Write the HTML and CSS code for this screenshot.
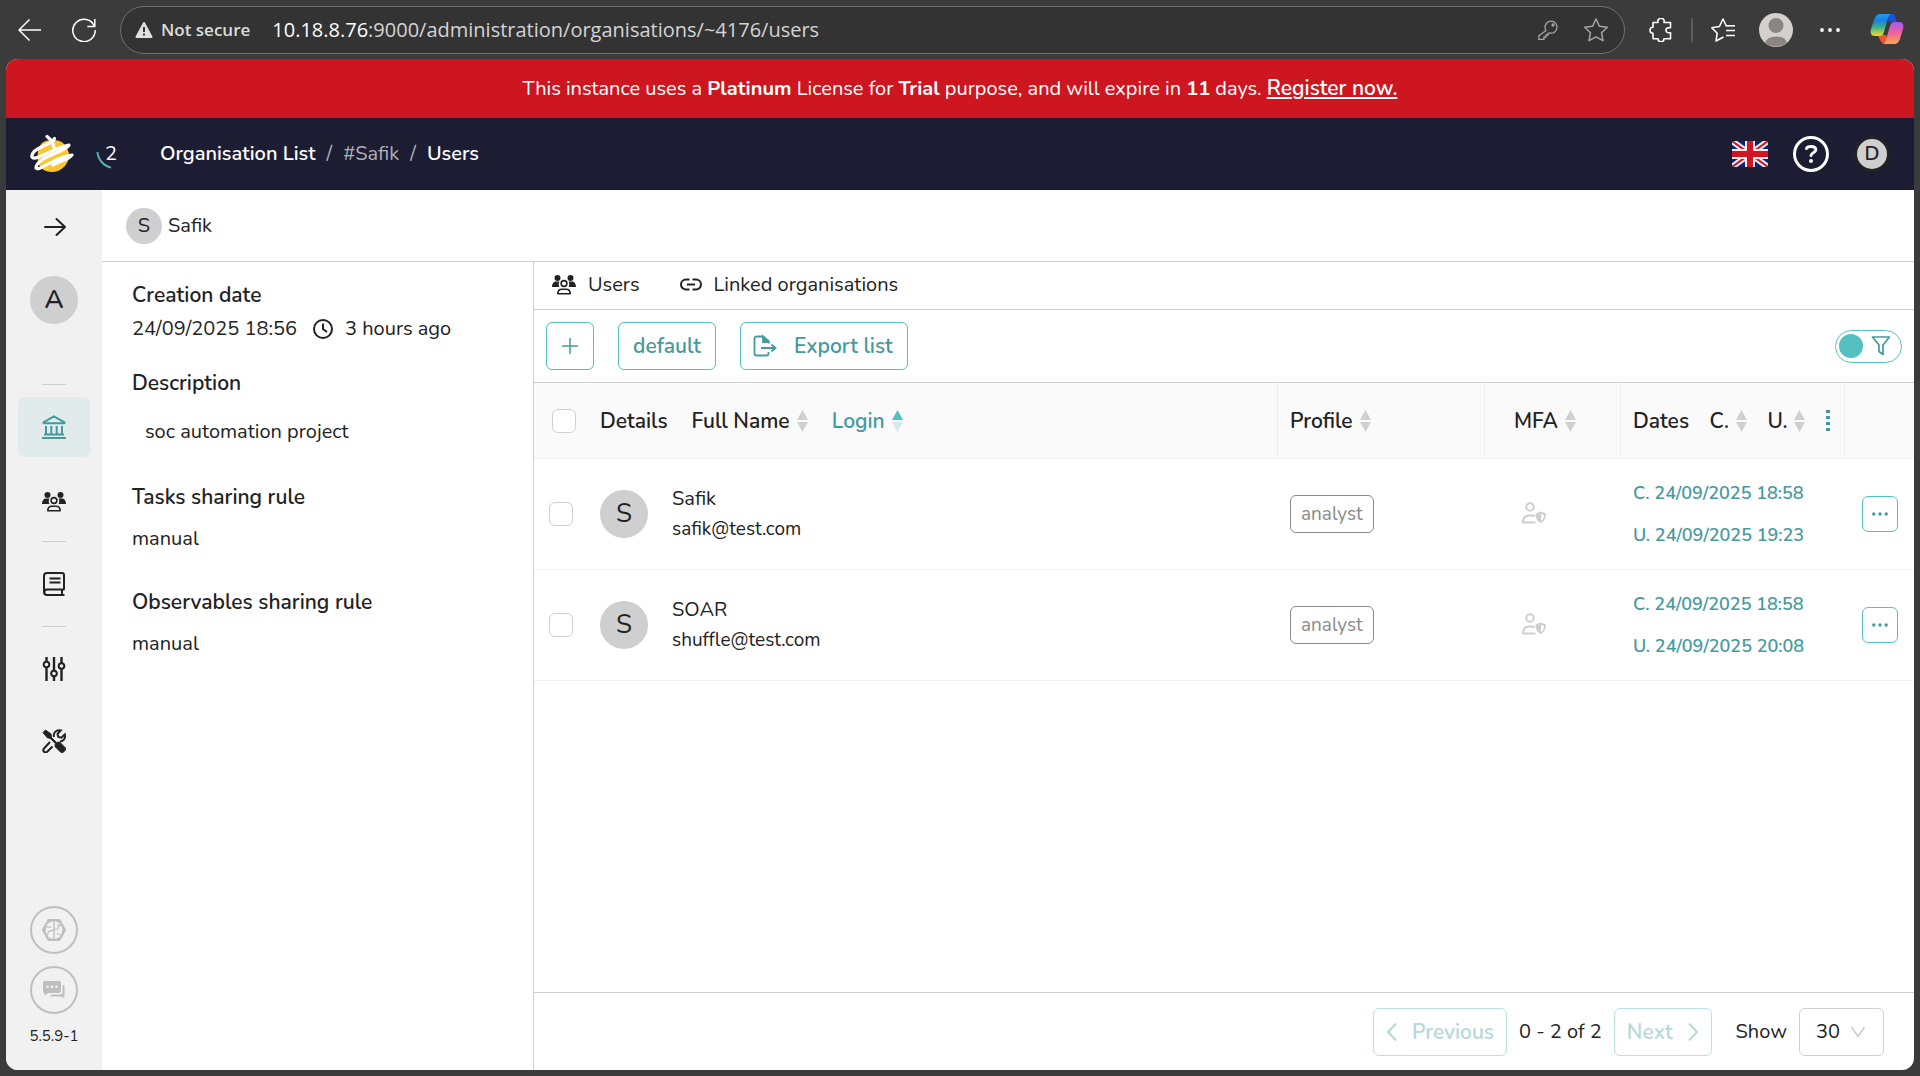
FILE: index.html
```html
<!DOCTYPE html>
<html lang="en">
<head>
<meta charset="utf-8">
<title>Organisation users</title>
<link rel="stylesheet" href="styles.css">
</head>
<body>
<svg class="sprite" aria-hidden="true">
  <symbol id="i-users" viewBox="0 0 24 24">
    <circle cx="5.500" cy="5" r="3"/><circle cx="18.500" cy="5" r="3"/>
    <path d="M0 14c0-3.500 2-5.500 4-5.500h3.500c-1 1.500-1 3.800 0 5.500zM24 14c0-3.500-2-5.500-4-5.500h-3.500c1 1.500 1 3.800 0 5.500z"/>
    <circle cx="12" cy="10.500" r="2.900" fill="none" stroke="currentColor" stroke-width="1.600"/>
    <path d="M5.800 20.800c0-3 2-4.600 4.200-4.600h4c2.200 0 4.200 1.600 4.200 4.600z" fill="none" stroke="currentColor" stroke-width="1.600" stroke-linejoin="round"/>
  </symbol>
  <symbol id="i-shield-user" viewBox="0 0 24 24">
    <g fill="none" stroke="currentColor" stroke-width="2"><circle cx="8" cy="5" r="3.700"/><path d="M12.500 14.300c-1-.6-2-.8-3.500-.8H7c-3.500 0-6 2.500-6 7h12.500"/></g>
    <path d="M18.700 9.500 24 11.500c0 5-2 8-5.300 9.500-3.300-1.500-5.300-4.500-5.300-9.500z"/><path d="M19 11.700v7.300c2-1.300 3-3.300 3.200-6.100z" fill="#fff"/>
  </symbol>
  <symbol id="i-sorter" viewBox="0 0 11 24">
    <path class="up" d="M5.500 1 11 11H0z"/><path class="down" d="M5.500 23 11 13H0z"/>
  </symbol>
</svg>

<div class="browser">
  <header class="toolbar">
    <button class="plain" aria-label="Back"><svg class="i24" viewBox="0 0 24 24" fill="none" stroke="#fff" stroke-width="1.500"><path d="M23 12H1M11.500 1.500 1 12l10.500 10.500"/></svg></button>
    <button class="plain reload" aria-label="Reload"><svg class="i24" viewBox="0 0 24 24" fill="none" stroke="#fff" stroke-width="1.500"><path d="M22.500 8.500A11.200 11.200 0 1 0 23.200 12M22.800 1v7.500h-7.500"/></svg></button>
    <div class="address">
      <svg class="i18" viewBox="0 0 18 18"><path d="M9 2 16.500 16H1.500z" fill="#e0e0e0" stroke="#e0e0e0" stroke-width="2" stroke-linejoin="round"/><path d="M9 6v5M9 12.500v2" stroke="#333" stroke-width="2"/></svg>
      <span class="secure">Not secure</span>
      <span class="url"><span class="host">10.18.8.76</span>:9000/administration/organisations/~4176/users</span>
      <svg class="i20" viewBox="0 0 20 20" fill="none" stroke="#a6a6a6" stroke-width="1.300"><path d="M8 10.500A6 6 0 1 1 11.500 13L10 13.500v1.500H8v2H6v2.300H.8v-3.500z"/><circle cx="15" cy="5" r="1" fill="#a6a6a6"/></svg>
      <svg class="i24" viewBox="0 0 24 24" fill="none" stroke="#a6a6a6" stroke-width="1.500" stroke-linejoin="round"><path d="M12 1l3.400 7.200 7.900 1-5.800 5.500 1.500 8L12 18.800 5 22.700l1.500-8L.7 9.200l7.900-1z"/></svg>
    </div>
    <svg class="i24" viewBox="0 0 24 24" fill="none" stroke="#fff" stroke-width="1.600" stroke-linejoin="round"><path d="M4 4.500h5a3.200 3.200 0 1 1 6 0h6.500v5.200h-2a2.500 2.500 0 0 0 0 5h2v6H15a3 3 0 0 1-6 0H4v-5.500a3 3 0 1 1 0-6z"/></svg>
    <span class="rule"></span>
    <svg class="i24" viewBox="0 0 24 24" fill="none" stroke="#fff" stroke-width="1.600" stroke-linejoin="round"><path d="M12.500 19 5 23l1.200-7.800L.8 9.700 8.400 8.500 12 1l3.600 7.500M15 12.500h9M15 17.500h9M15.600 8.500"/><path d="M15.500 7.800H24"/></svg>
    <svg class="i34" viewBox="0 0 34 34"><circle cx="17" cy="17" r="17" fill="#d3d0cd"/><circle cx="17" cy="12.500" r="7.500" fill="#8a8583"/><path d="M6 29.500a11.500 8.500 0 0 1 22 0A17 17 0 0 1 6 29.500z" fill="#8a8583"/></svg>
    <svg class="i20 dots" viewBox="0 0 20 20"><circle cx="2" cy="10" r="1.900"/><circle cx="10" cy="10" r="1.900"/><circle cx="18" cy="10" r="1.900"/></svg>
    <svg class="i34" viewBox="0 0 34 34">
      <defs><linearGradient id="c1" x1="0" y1="0" x2="0" y2="1"><stop offset="0" stop-color="#1e9cf5"/><stop offset=".3" stop-color="#1a7fe0"/><stop offset=".6" stop-color="#3bb08a"/><stop offset="1" stop-color="#f7dc1b"/></linearGradient>
      <linearGradient id="c2" x1="0" y1="0" x2="0" y2="1"><stop offset="0" stop-color="#a259f0"/><stop offset=".5" stop-color="#f0619a"/><stop offset="1" stop-color="#fba94c"/></linearGradient></defs>
      <path d="M18 1h4c2 0 3 2 3.500 4l1 4h-8z" fill="#1c50d8"/><path d="M8 22h8l4 9h-4c-3 0-5-2-6-4z" fill="#f2552c"/>
      <path d="M10 1h12c-2 0-3 1-4 4l-4 14c-1 3-2 4-5 4H5c-4 0-5-3-4-7L4.500 6c1-3 2.500-5 5.500-5z" fill="url(#c1)"/>
      <path d="M24 31H12c2 0 3-1 4-4l4-14c1-3 2-4 5-4h4c4 0 5 3 4 7l-3 10c-1 3-3 5-6 5z" fill="url(#c2)"/>
    </svg>
  </header>

  <div class="app">
    <div class="banner"><p>This instance uses a <b>Platinum</b> License for <b>Trial</b> purpose, and will expire in <b>11</b> days. <a href="#register">Register now.</a></p></div>

    <nav class="topnav">
      <svg class="logo" viewBox="0 0 44 40"><path d="M12 9C16 5 29 5 33 9c4 4 7 10 6 15-2 8-9 14-17 14S9 33 8 28c-1-8 0-15 4-19z" fill="#ffc52e"/>
        <path d="M20 9C11 13 1 17 2 23c3 5 18-8 37-12C36 18 6 23 6 34c3 4 18-11 36-13-3 5-12 5-19 10" fill="none" stroke="#fff" stroke-width="3.200" stroke-linecap="round" stroke-linejoin="round"/>
        <path d="M17 2.500l4.500 4M24.500 4.500l-1 2M22.500 8.500l1.500 5" stroke="#fff" stroke-width="3.200" stroke-linecap="round"/></svg>
      <span class="jobs"><svg class="arc" viewBox="0 0 16 18"><path d="M1.500 1A17 17 0 0 0 15 16.500" fill="none" stroke="#4fb3b5" stroke-width="2"/></svg>2</span>
      <ol class="crumbs"><li><a href="#list">Organisation List</a></li><li class="dim">/</li><li class="dim">#Safik</li><li class="dim">/</li><li><a href="#users">Users</a></li></ol>
      <svg class="flag" viewBox="0 0 36 26"><defs><clipPath id="fc"><rect width="36" height="26" rx="3"/></clipPath></defs><g clip-path="url(#fc)"><path d="M0 0h36v26H0z" fill="#0b1f7c"/><path d="M0 0l36 26M36 0 0 26" stroke="#eee" stroke-width="6"/><path d="M0 0l36 26M36 0 0 26" stroke="#d01525" stroke-width="2"/><path d="M18 0v26M0 13h36" stroke="#eee" stroke-width="10"/><path d="M18 0v26M0 13h36" stroke="#d01525" stroke-width="6"/></g></svg>
      <button class="plain" aria-label="Help"><svg class="i36" viewBox="0 0 36 36" fill="none" stroke="#fff"><circle cx="18" cy="18" r="16.500" stroke-width="3"/><path d="M13.500 12.500c.5-1.500 2-2 4.500-2 3 0 4.800 1.200 4.800 3.300 0 3-4.800 2.800-4.800 5.700" stroke-width="3" stroke-linecap="round"/><circle cx="18" cy="25" r="2" fill="#fff" stroke="none"/></svg></button>
      <button class="me">D</button>
    </nav>

    <div class="body">
      <aside class="side">
        <button class="plain expand" aria-label="Expand"><svg class="i24" viewBox="0 0 24 24" fill="none" stroke="#222" stroke-width="2" stroke-linecap="round" stroke-linejoin="round"><path d="M3 12h20M14.500 4l8.500 8-8.500 8"/></svg></button>
        <span class="avatar strong">A</span>
        <div class="menu">
          <hr>
          <a class="item active" href="#orgs" aria-label="Organisations"><svg class="i24" viewBox="0 0 24 24" fill="none" stroke="currentColor" stroke-width="2"><path d="M1.500 7.300 12 1.300l10.500 6v.9h-21z" stroke-linejoin="round"/><path d="M4 11v8M9.300 11v8M14.700 11v8M20 11v8M2 19.500h20M0 23h24"/></svg></a>
          <a class="item low" href="#users" aria-label="Users"><svg class="i24"><use href="#i-users"/></svg></a>
          <hr>
          <a class="item" href="#catalog" aria-label="Entities"><svg class="i24" viewBox="0 0 24 24" fill="none" stroke="currentColor" stroke-width="2"><path d="M22 17.500V3a2 2 0 0 0-2-2H5a3 3 0 0 0-3 3v16a3 3 0 0 0 3 3h17.500M20 17.500v5.500M22.500 17.500H5a2.700 2.700 0 0 0 0 5.400M7.500 6.500h11M7.500 10.500h11"/></svg></a>
          <hr>
          <a class="item" href="#platform" aria-label="Platform"><svg class="i24" viewBox="0 0 24 24" fill="none" stroke="currentColor" stroke-width="2"><path d="M4.500 0v4.500M4.500 10.500V24M12 0v13.500M12 19.500V24M19.500 0v6M19.500 12v12" stroke-width="2.400"/><circle cx="4.500" cy="7.500" r="2.800"/><circle cx="12" cy="16.500" r="2.800"/><circle cx="19.500" cy="9" r="2.800"/></svg></a>
          <a class="item" href="#tools" aria-label="Tools"><svg class="i24" viewBox="0 0 24 24"><path d="M1 3.500 3.500 1l5.500 4 .5 3.500 5 5 3-.5 6 6c1 1.500-2.500 5.500-4.500 4.500l-6-6 .3-3-5-5L5 8.500z" stroke="currentColor" stroke-linejoin="round"/><path d="M8 13l-6 6.500a2.200 2.200 0 0 0 3.200 3.200l5.300-5.200M12 8c-1-4 2-7.500 6.800-6.600L15.500 5l.8 3 3 .7 3.500-3.300c1 4-1.500 7-4.800 7.300" fill="none" stroke="currentColor" stroke-width="2"/></svg></a>
        </div>
        <div class="status">
          <span class="ring"><svg class="i24" viewBox="0 0 26 26"><path d="M7 2h12l6 11-6 11H7L1 13z" fill="currentColor" stroke="currentColor" stroke-width="2" stroke-linejoin="round"/><path d="M12.300 3.500C7 3.500 4 8 4 13s3 9.500 8.300 9.500zM13.700 3.500C19 3.500 22 8 22 13s-3 9.500-8.300 9.500z" fill="#f1f1f1"/><path d="M4 9.500c3-1 4 1.500 6 0M6 19c0-5 2-5 8-6M14 12c4 1 3-1 4-3M16 17c3 0 3 2 6 1M17 8h4M18 6v5" fill="none" stroke="currentColor" stroke-width="1.200"/></svg></span>
          <span class="ring"><svg class="i24" viewBox="0 0 24 24"><path d="M3 3h14a2 2 0 0 1 2 2v8a2 2 0 0 1-2 2H6l-3.500 3V15A2 2 0 0 1 1 13V5a2 2 0 0 1 2-2z"/><path d="M20.500 7H21c1 0 1.500.6 1.500 1.500v9c0 .6-.4 1-1 1V20.500L19 18.500H8l1.500-2H18a2.500 2.500 0 0 0 2.500-2.500z"/><g fill="#f1f1f1"><circle cx="5.500" cy="8.800" r="1.300"/><circle cx="10" cy="8.800" r="1.300"/><circle cx="14.500" cy="8.800" r="1.300"/></g></svg></span>
          <span class="version">5.5.9-1</span>
        </div>
      </aside>

      <main class="page">
        <header class="orgbar"><span class="avatar small">S</span><h1>Safik</h1></header>
        <div class="split">
          <section class="info">
            <h2>Creation date</h2>
            <p class="when"><span>24/09/2025 18:56</span><svg class="i20" viewBox="0 0 20 20" fill="none" stroke="#222" stroke-width="2"><circle cx="10" cy="10" r="9"/><path d="M10 4.500V10l4 3"/></svg><span>3 hours ago</span></p>
            <h2>Description</h2>
            <p class="desc">soc automation project</p>
            <h2>Tasks sharing rule</h2>
            <p>manual</p>
            <h2>Observables sharing rule</h2>
            <p>manual</p>
          </section>

          <section class="content">
            <nav class="tabs">
              <a href="#users"><svg class="i24"><use href="#i-users"/></svg>Users</a>
              <a href="#linked"><svg class="i22" viewBox="0 0 22 22" fill="none" stroke="#222" stroke-width="2"><path d="M9.500 5.500H6a5 5 0 0 0 0 10h3.500M12.500 5.500H16a5 5 0 0 1 0 10h-3.500M7 10.500h8"/></svg>Linked organisations</a>
            </nav>
            <div class="actions">
              <button class="btn square" aria-label="Add"><svg class="i16" viewBox="0 0 16 16" stroke="currentColor" stroke-width="1.500"><path d="M8 0v16M0 8h16"/></svg></button>
              <button class="btn">default</button>
              <button class="btn export"><svg class="i24" viewBox="0 0 24 24" fill="none" stroke="currentColor" stroke-width="1.800"><path d="M15.500 9.500V7L10 2.500H3.500A2 2 0 0 0 1.500 4.500v15a2 2 0 0 0 2 2h10a2 2 0 0 0 2-2V18M8 14h14M18.500 10.500 22.500 14l-4 3.500"/><path d="M10 2.500V8h5.500z" fill="currentColor"/></svg>Export list</button>
              <label class="switch"><input type="checkbox" role="switch" aria-label="Filters"><svg class="i20" viewBox="0 0 20 20" fill="none" stroke="#449a9c" stroke-width="1.700"><path d="M1.500 1h17L12 9v9.500L8 15.500V9z" stroke-linejoin="round"/></svg></label>
            </div>
            <div class="grid">
              <table>
                <colgroup><col class="c-check"><col><col class="c-profile"><col class="c-mfa"><col class="c-dates"><col class="c-act"></colgroup>
                <thead><tr>
                  <th class="all"><input type="checkbox" aria-label="Select all"></th>
                  <th class="line"><div class="heads details"><span>Details</span><span class="sort">Full Name<svg class="sorter"><use href="#i-sorter"/></svg></span><span class="sort on">Login<svg class="sorter"><use href="#i-sorter"/></svg></span></div></th>
                  <th class="line"><span class="sort">Profile<svg class="sorter"><use href="#i-sorter"/></svg></span></th>
                  <th class="line mfa"><span class="sort">MFA<svg class="sorter"><use href="#i-sorter"/></svg></span></th>
                  <th class="line"><div class="heads dates"><span>Dates</span><span class="sort">C.<svg class="sorter"><use href="#i-sorter"/></svg></span><span class="sort">U.<svg class="sorter"><use href="#i-sorter"/></svg></span><svg class="more" viewBox="0 0 4 24"><path d="M0 1h4v3H0zM0 7h4v3H0zM0 13h4v3H0zM0 19h4v3H0z"/></svg></div></th>
                  <th></th>
                </tr></thead>
                <tbody>
                  <tr>
                    <td class="pick"><input type="checkbox" aria-label="Select Safik"></td>
                    <td><div class="user"><span class="avatar">S</span><div><p>Safik</p><p class="mail">safik@test.com</p></div></div></td>
                    <td><span class="tag">analyst</span></td>
                    <td class="mfa"><svg class="i24"><use href="#i-shield-user"/></svg></td>
                    <td class="stamps"><p>C. 24/09/2025 18:58</p><p>U. 24/09/2025 19:23</p></td>
                    <td class="act"><button class="btn mini" aria-label="Actions"><svg class="i16" viewBox="0 0 16 16"><circle cx="1.800" cy="8" r="1.700"/><circle cx="8" cy="8" r="1.700"/><circle cx="14.200" cy="8" r="1.700"/></svg></button></td>
                  </tr>
                  <tr>
                    <td class="pick"><input type="checkbox" aria-label="Select SOAR"></td>
                    <td><div class="user"><span class="avatar">S</span><div><p>SOAR</p><p class="mail">shuffle@test.com</p></div></div></td>
                    <td><span class="tag">analyst</span></td>
                    <td class="mfa"><svg class="i24"><use href="#i-shield-user"/></svg></td>
                    <td class="stamps"><p>C. 24/09/2025 18:58</p><p>U. 24/09/2025 20:08</p></td>
                    <td class="act"><button class="btn mini" aria-label="Actions"><svg class="i16" viewBox="0 0 16 16"><circle cx="1.800" cy="8" r="1.700"/><circle cx="8" cy="8" r="1.700"/><circle cx="14.200" cy="8" r="1.700"/></svg></button></td>
                  </tr>
                </tbody>
              </table>
            </div>
            <footer class="pager">
              <button class="btn nav-btn" disabled><svg class="chev" viewBox="0 0 12 20" fill="none"><path d="M10 1.500 2 10l8 8.500"/></svg>Previous</button>
              <span>0 - 2 of 2</span>
              <button class="btn nav-btn" disabled>Next<svg class="chev" viewBox="0 0 12 20" fill="none"><path d="M2 1.500 10 10l-8 8.500"/></svg></button>
              <label for="size">Show</label>
              <span class="select"><select id="size"><option>30</option></select><svg class="i16" viewBox="0 0 16 16" fill="none" stroke="#c9c9c9" stroke-width="1.500"><path d="M1.500 3 8 12.500 14.500 3"/></svg></span>
            </footer>
          </section>
        </div>
      </main>
    </div>
  </div>
</div>
</body>
</html>
```
FILE: styles.css
```css
* { box-sizing: border-box; }
:root { --teal: #449a9c; --teal-line: #55c0c2; --line: #cfcfcf; --ink: #222; --soft: #cfcfcf; --semi: 650; }
body { margin: 0; background: #3b3b3b; color: var(--ink); font: 20px/24px "Nunito", "Open Sans", sans-serif; }
p, h1, h2, ol { margin: 0; padding: 0; }
a { color: inherit; text-decoration: none; }
button, input, select { font: inherit; color: inherit; margin: 0; }
svg { display: block; flex: none; }
svg:not([fill]) { fill: currentColor; }
.sprite { position: absolute; width: 0; height: 0; }
.i16 { width: 16px; height: 16px; }
.i18 { width: 18px; height: 18px; }
.i20 { width: 20px; height: 20px; }
.i22 { width: 22px; height: 22px; }
.i24 { width: 24px; height: 24px; }
.i34 { width: 34px; height: 34px; }
.i36 { width: 36px; height: 36px; }
.plain { border: 0; background: none; padding: 0; }

/* Browser chrome */
.browser { display: flex; flex-direction: column; min-height: 100vh; padding: 0 6px 6px; }
.toolbar { display: flex; align-items: center; gap: 24px; height: 59px; padding: 0 10px 0 12px; }
.reload { margin-left: 6px; }
.address { flex: 1; display: flex; align-items: center; height: 48px; padding: 0 16px 0 14px; border: 1px solid #707070; border-radius: 24px; background: #333; font-family: "Open Sans", sans-serif; }
.secure { margin: 0 22px 0 8px; color: #dcdcdc; font-size: 17px; font-weight: 600; }
.url { flex: 1; color: #d4d4d4; font-size: 20px; }
.host { color: #fff; }
.address .i20 { margin-right: 26px; }
.rule { width: 2px; height: 24px; margin: 0 -6px; background: #5c5c5c; }
.dots { margin: 0 6px 0 3px; color: #fff; }

/* Application header */
.app { flex: 1; display: flex; flex-direction: column; border-radius: 12px; overflow: hidden; background: #fff; }
.banner { display: flex; align-items: center; justify-content: center; height: 59px; background: #ce1620; color: #fff; }
.banner a { font-size: 21px; font-weight: var(--semi); text-decoration: underline; }
.topnav { display: flex; align-items: center; height: 72px; padding: 0 24px; background: #1c1c33; color: #fff; }
.logo { width: 44px; height: 40px; }
.jobs { display: flex; align-items: center; width: 60px; margin: 0 4px 0 22px; }
.arc { width: 16px; height: 18px; margin: 12px -7px 0 0; }
.crumbs { flex: 1; display: flex; gap: 11px; list-style: none; font-weight: var(--semi); }
.dim { color: #b0b0b8; font-weight: 400; }
.flag { width: 36px; height: 26px; margin-right: 25px; }
.me { width: 36px; height: 36px; margin-left: 25px; padding: 0; border: 3px solid var(--ink); border-radius: 50%; background: var(--soft); color: var(--ink); font-weight: 600; }

/* Sidebar */
.body { flex: 1; display: flex; }
.side { display: flex; flex-direction: column; align-items: center; width: 96px; padding: 25px 0 24px; background: #f1f1f1; }
.avatar { display: flex; align-items: center; justify-content: center; flex: none; width: 48px; height: 48px; border-radius: 50%; background: var(--soft); font-size: 26px; }
.strong { font-weight: 600; }
.side .avatar { margin: 37px 0 60px; }
.menu { display: flex; flex-direction: column; align-items: center; gap: 12px; }
.menu hr { width: 24px; height: 1px; margin: 0; border: 0; background: var(--line); }
.item { display: flex; align-items: center; justify-content: center; width: 72px; height: 60px; border-radius: 6px; }
.low { padding-top: 6px; }
.active { background: #e1ebec; color: var(--teal); }
.status { display: flex; flex-direction: column; align-items: center; gap: 12px; margin-top: auto; color: #bfbfbf; }
.ring { display: flex; align-items: center; justify-content: center; width: 48px; height: 48px; border: 2px solid #bfbfbf; border-radius: 50%; }
.version { color: var(--ink); font-size: 15px; line-height: 20px; }

/* Organisation details */
.page { flex: 1; min-width: 0; display: flex; flex-direction: column; }
.orgbar { display: flex; align-items: center; gap: 6px; height: 72px; padding: 0 24px; border-bottom: 1px solid var(--line); }
.orgbar h1 { font-size: 20px; font-weight: 400; }
.avatar.small { width: 36px; height: 36px; font-size: 20px; }
.split { flex: 1; display: flex; }
.info { width: 431px; padding: 21px 30px; }
.info h2 { margin-bottom: 18px; font-size: 21px; line-height: 24px; font-weight: var(--semi); }
.info p { margin-bottom: 39px; }
.info h2:first-child { margin-bottom: 10px; }
.info .when { display: flex; align-items: center; margin-bottom: 30px; }
.when svg { margin: 0 12px 0 16px; }
.info .desc { margin: 25px 13px 41px; }

/* Users list */
.content { flex: 1; min-width: 0; display: flex; flex-direction: column; border-left: 1px solid var(--line); }
.tabs { display: flex; align-items: center; gap: 40px; height: 48px; padding: 0 18px 2px; border-bottom: 1px solid var(--line); }
.tabs a { display: flex; align-items: center; gap: 12px; }
.actions { display: flex; align-items: center; gap: 24px; height: 73px; padding: 0 12px; border-bottom: 1px solid var(--line); }
.btn { display: inline-flex; align-items: center; justify-content: center; height: 48px; padding: 0 14px; border: 1px solid var(--teal-line); border-radius: 6px; background: #fff; color: var(--teal); font-size: 21px; font-weight: var(--semi); }
.btn.square { width: 48px; padding: 0; }
.btn.export { gap: 17px; padding: 0 14px 0 12px; }
.switch { display: flex; align-items: center; gap: 8px; width: 67px; height: 33px; margin-left: auto; padding: 0 3px; border: 1px solid var(--teal-line); border-radius: 17px; }
.switch input { appearance: none; width: 24px; height: 24px; border-radius: 50%; background: #55c0c2; }

.grid { flex: 1; }
table { width: 100%; border-collapse: separate; border-spacing: 0; table-layout: fixed; }
.c-check { width: 54px; }
.c-profile { width: 207px; }
.c-mfa { width: 136px; }
.c-dates { width: 224px; }
.c-act { width: 69px; }
th { height: 76px; padding: 0 12px; background: #fafafa; border-bottom: 1px solid #f0f0f0; text-align: left; font-size: 21px; font-weight: var(--semi); }
th.line { border-right: 1px solid #f0f0f0; }
td { height: 111px; padding: 0 12px; border-bottom: 1px solid #f0f0f0; }
th.all { padding: 0 0 0 18px; }
td.pick { padding: 0 0 0 15px; }
table input { appearance: none; display: block; width: 24px; height: 24px; border: 1px solid var(--line); border-radius: 6px; background: #fff; }
.heads { display: flex; align-items: center; }
.details { gap: 24px; }
.sort { display: inline-flex; align-items: center; gap: 7px; }
.sorter { width: 11px; height: 24px; color: #cfcfcf; }
.on { color: var(--teal); }
.on .sorter { color: #55c0c2; --down: #d3e8e8; }
.down { fill: var(--down, currentColor); }
.dates { justify-content: space-between; padding-right: 2px; }
.more { width: 4px; height: 24px; color: #4296a5; }
th.mfa { padding-left: 29px; }
td.mfa { padding-left: 37px; color: #cfcfcf; }
.user { display: flex; align-items: center; gap: 24px; }
.user p { line-height: 30px; }
.user .mail { font-size: 19px; }
.tag { display: inline-block; padding: 0 10px; border: 1px solid #8a8a8a; border-radius: 6px; color: #8a8a8a; font-size: 19px; line-height: 36px; }
.stamps { color: var(--teal); font-size: 18px; line-height: 42px; font-weight: var(--semi); }
td.act { padding: 0 0 0 17px; }
.btn.mini { width: 36px; height: 36px; padding: 0; }

.pager { display: flex; align-items: center; justify-content: flex-end; gap: 12px; height: 78px; padding: 0 30px; border-top: 1px solid var(--line); }
.btn.nav-btn { gap: 14px; padding: 0 12px; border-color: #b5e3e4; color: #b5d9da; }
.chev { width: 12px; height: 20px; stroke: currentColor; stroke-width: 2; }
.pager label { margin-left: 12px; }
.select { display: flex; align-items: center; width: 85px; height: 48px; padding: 0 17px 0 16px; border: 1px solid var(--line); border-radius: 6px; }
.select select { appearance: none; flex: 1; min-width: 0; padding: 0; border: 0; background: none; }
```
